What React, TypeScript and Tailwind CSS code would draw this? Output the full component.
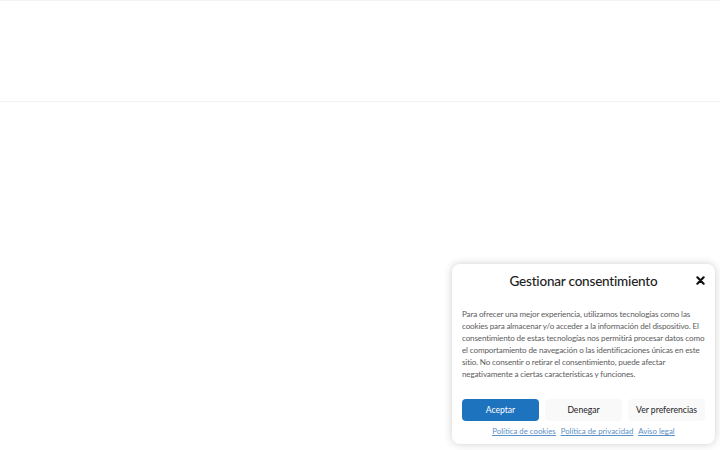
import React from "react"

const font = { fontFamily: "Lato, 'Open Sans', sans-serif" }

export default function App() {
  return (
    <div className="relative w-[720px] h-[450px] overflow-hidden bg-white" style={font}>
      {/* Header */}
      <header className="h-[102px] border-t border-b border-[#f3f3f3] bg-white" />

      {/* Consent banner */}
      <div className="absolute left-[452px] top-[264px] w-[263px] rounded-lg bg-white px-[10px] pt-[7px] pb-[6px] shadow-[0_0_8px_rgba(0,0,0,0.2)]">
        <div className="relative flex items-center justify-center h-[20px]">
          <h2 className="text-[13.5px] font-medium text-[#222] tracking-[-0.2px]">Gestionar consentimiento</h2>
          <button className="absolute right-0 top-[5px] text-[#111]">
            <svg width="9" height="9" viewBox="0 0 10 10">
              <path d="M1.5 1.5 L8.5 8.5 M8.5 1.5 L1.5 8.5" stroke="currentColor" strokeWidth="2.4" strokeLinecap="round" />
            </svg>
          </button>
        </div>

        <p className="mt-[17px] text-[8.1px] leading-[12px] text-[#5c5c5c] tracking-[-0.15px]">
          Para ofrecer una mejor experiencia, utilizamos tecnologías como las cookies para almacenar y/o acceder a la información del dispositivo. El consentimiento de estas tecnologías nos permitirá procesar datos como el comportamiento de navegación o las identificaciones únicas en este sitio. No consentir o retirar el consentimiento, puede afectar negativamente a ciertas características y funciones.
        </p>

        <div className="mt-[19px] flex gap-[6px]">
          <button className="w-[77px] h-[22px] rounded-[4px] bg-[#1e73be] text-white text-[8.6px]">Aceptar</button>
          <button className="w-[77px] h-[22px] rounded-[4px] bg-[#f9f9f9] text-[#222] text-[8.6px]">Denegar</button>
          <button className="w-[77px] h-[22px] rounded-[4px] bg-[#f9f9f9] text-[#222] text-[8.6px]">Ver preferencias</button>
        </div>

        <div className="mt-[5px] flex justify-center gap-[5px] text-[7.8px] text-[#5b8fc7] underline">
          <a>Política de cookies</a>
          <a>Política de privacidad</a>
          <a>Aviso legal</a>
        </div>
      </div>
    </div>
  )
}
